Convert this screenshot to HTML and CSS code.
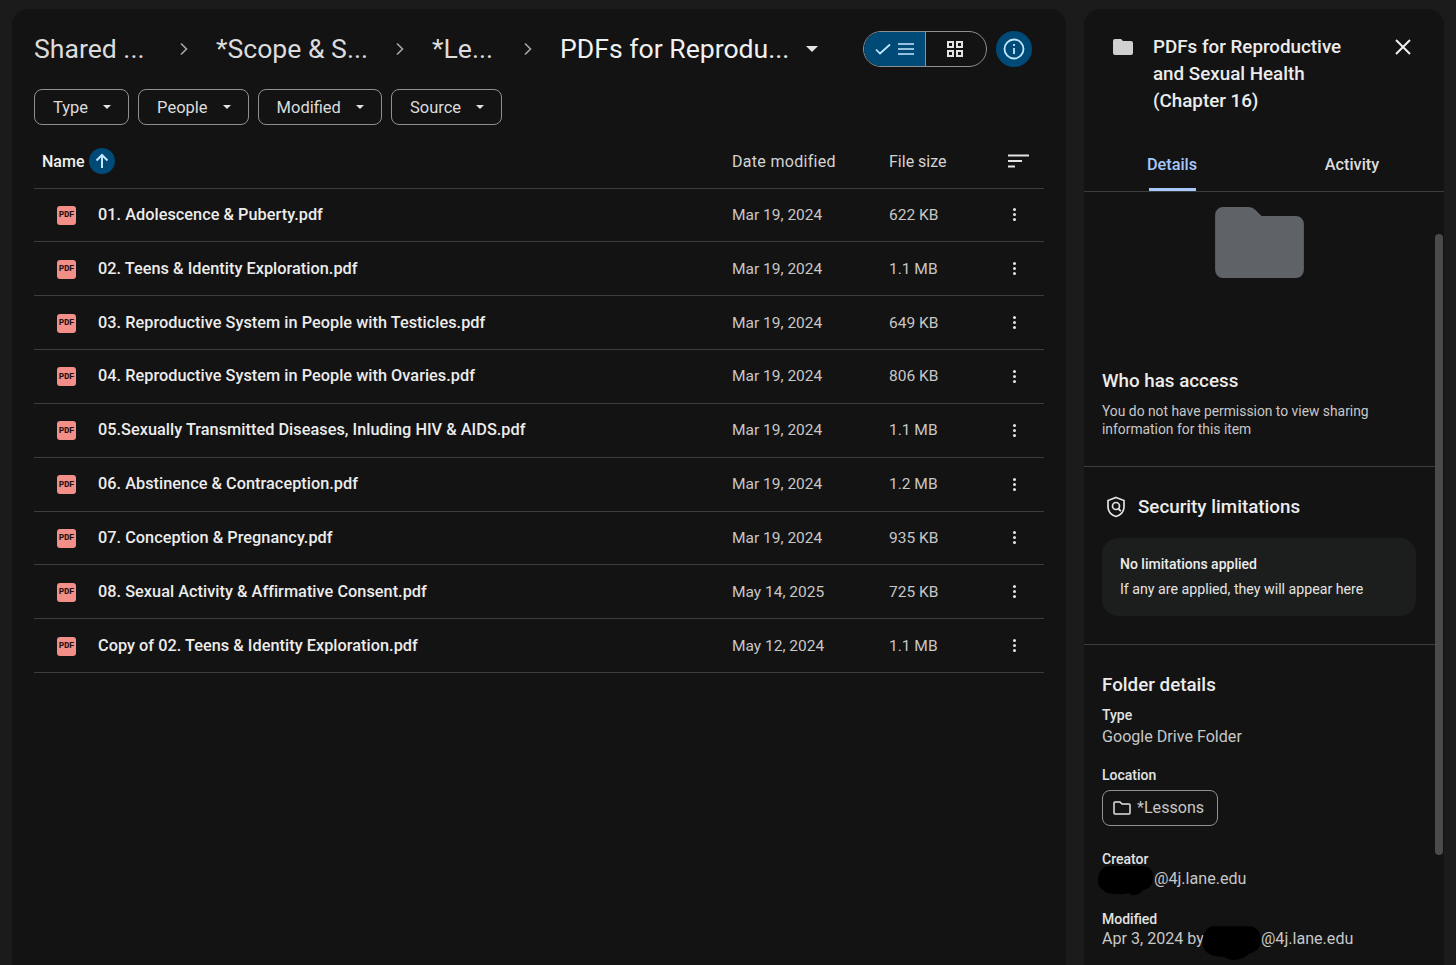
FILE: index.html
```html
<!DOCTYPE html>
<html>
<head>
  <title>PDFs for Reproductive and Sexual Health (Chapter 16)</title>
  <link rel="stylesheet" href="styles.css">
</head>
<body>
  <main class="files">
    <div class="toolbar">
      <div class="crumbs">
        <span class="crumb crumb-shared">Shared ...</span>
        <svg class="chevron" viewBox="0 0 8 14"><path d="M1 1.5 6.5 7 1 12.5"/></svg>
        <span class="crumb crumb-scope">*Scope &amp; S...</span>
        <svg class="chevron" viewBox="0 0 8 14"><path d="M1 1.5 6.5 7 1 12.5"/></svg>
        <span class="crumb crumb-lessons">*Le...</span>
        <svg class="chevron" viewBox="0 0 8 14"><path d="M1 1.5 6.5 7 1 12.5"/></svg>
        <span class="crumb crumb-current">PDFs for Reprodu...</span>
        <span class="caret caret-big"></span>
      </div>
      <div class="view-toggle">
        <span class="view-list">
          <svg width="16" height="12" viewBox="0 0 16 12"><path d="M1 6.5 5 10.5 15 1.5"/></svg>
          <svg width="16" height="14" viewBox="0 0 16 14"><path d="M0 2h16M0 7h16M0 12h16"/></svg>
        </span>
        <span class="view-grid">
          <svg width="16" height="16" viewBox="0 0 16 16"><path d="M1 1h5v5H1zM10 1h5v5h-5zM1 10h5v5H1zM10 10h5v5h-5z"/></svg>
        </span>
      </div>
      <span class="info-btn">
        <svg width="22" height="22" viewBox="0 0 22 22"><circle cx="11" cy="11" r="9.5"/><path d="M11 10v6"/><path d="M11 6v2"/></svg>
      </span>
    </div>

    <div class="filters">
      <span class="filter">Type <span class="caret"></span></span>
      <span class="filter">People <span class="caret"></span></span>
      <span class="filter">Modified <span class="caret"></span></span>
      <span class="filter">Source <span class="caret"></span></span>
    </div>

    <div class="file-table">
      <div class="file-row file-head">
        <span class="head-name">Name
          <span class="sort-btn"><svg width="14" height="16" viewBox="0 0 14 16"><path d="M7 15V2M1.5 7.5 7 2l5.5 5.5"/></svg></span>
        </span>
        <span class="head-date">Date modified</span>
        <span>File size</span>
        <svg class="sort-lines" width="22" height="14" viewBox="0 0 22 14"><path d="M0 1.5h21M0 7h14M0 12.500h7"/></svg>
      </div>

      <div class="file-row">
        <span class="file-name"><span class="pdf-icon">PDF</span>01. Adolescence &amp; Puberty.pdf</span>
        <span>Mar 19, 2024</span><span>622 KB</span><span class="kebab"></span>
      </div>
      <div class="file-row">
        <span class="file-name"><span class="pdf-icon">PDF</span>02. Teens &amp; Identity Exploration.pdf</span>
        <span>Mar 19, 2024</span><span>1.1 MB</span><span class="kebab"></span>
      </div>
      <div class="file-row">
        <span class="file-name"><span class="pdf-icon">PDF</span>03. Reproductive System in People with Testicles.pdf</span>
        <span>Mar 19, 2024</span><span>649 KB</span><span class="kebab"></span>
      </div>
      <div class="file-row">
        <span class="file-name"><span class="pdf-icon">PDF</span>04. Reproductive System in People with Ovaries.pdf</span>
        <span>Mar 19, 2024</span><span>806 KB</span><span class="kebab"></span>
      </div>
      <div class="file-row">
        <span class="file-name"><span class="pdf-icon">PDF</span>05.Sexually Transmitted Diseases, Inluding HIV &amp; AIDS.pdf</span>
        <span>Mar 19, 2024</span><span>1.1 MB</span><span class="kebab"></span>
      </div>
      <div class="file-row">
        <span class="file-name"><span class="pdf-icon">PDF</span>06. Abstinence &amp; Contraception.pdf</span>
        <span>Mar 19, 2024</span><span>1.2 MB</span><span class="kebab"></span>
      </div>
      <div class="file-row">
        <span class="file-name"><span class="pdf-icon">PDF</span>07. Conception &amp; Pregnancy.pdf</span>
        <span>Mar 19, 2024</span><span>935 KB</span><span class="kebab"></span>
      </div>
      <div class="file-row">
        <span class="file-name"><span class="pdf-icon">PDF</span>08. Sexual Activity &amp; Affirmative Consent.pdf</span>
        <span>May 14, 2025</span><span>725 KB</span><span class="kebab"></span>
      </div>
      <div class="file-row">
        <span class="file-name"><span class="pdf-icon">PDF</span>Copy of 02. Teens &amp; Identity Exploration.pdf</span>
        <span>May 12, 2024</span><span>1.1 MB</span><span class="kebab"></span>
      </div>
    </div>
  </main>

  <aside class="details">
    <div class="details-title">
      <svg class="title-folder" width="20" height="16" viewBox="0 0 20 16"><path d="M2 0h6l2 2h8a2 2 0 0 1 2 2v10a2 2 0 0 1-2 2H2a2 2 0 0 1-2-2V2a2 2 0 0 1 2-2z"/></svg>
      <h2>PDFs for Reproductive and Sexual Health (Chapter 16)</h2>
      <svg class="close" width="16" height="16" viewBox="0 0 16 16"><path d="M1 1l14 14M15 1 1 15"/></svg>
    </div>

    <div class="tabs">
      <span class="tab tab-active">Details</span>
      <span class="tab">Activity</span>
    </div>

    <div class="preview">
      <svg width="89" height="71" viewBox="0 0 90 72"><path d="M8 0h26q4 0 7 3l6 6h35a8 8 0 0 1 8 8v47a8 8 0 0 1-8 8H8a8 8 0 0 1-8-8V8a8 8 0 0 1 8-8z"/></svg>
    </div>

    <section class="section access">
      <h3>Who has access</h3>
      <p>You do not have permission to view sharing information for this item</p>
    </section>

    <section class="section security">
      <h3 class="security-title">
        <svg width="20" height="22" viewBox="0 0 20 22"><path d="M10 1.500 18 4.500v6c0 5-3.400 8.500-8 10-4.600-1.500-8-5-8-10v-6z"/><circle cx="10" cy="10" r="3.500"/><path d="M12.500 12.500c.5 1 1.500 2 2.500 2.500"/></svg>
        Security limitations
      </h3>
      <div class="limit-card">
        <strong>No limitations applied</strong>
        <span>If any are applied, they will appear here</span>
      </div>
    </section>

    <section class="folder-details">
      <h3>Folder details</h3>
      <dl>
        <dt>Type</dt>
        <dd>Google Drive Folder</dd>
        <dt class="dt-location">Location</dt>
        <dd>
          <span class="location-chip">
            <svg width="18" height="14" viewBox="0 0 18 14"><path d="M2 1h5l2 2h7a1 1 0 0 1 1 1v8a1 1 0 0 1-1 1H2a1 1 0 0 1-1-1V2a1 1 0 0 1 1-1z"/></svg>
            *Lessons
          </span>
        </dd>
        <dt class="dt-creator">Creator</dt>
        <dd class="person"><svg class="redacted redacted-creator" viewBox="0 0 56 32"><path d="M12 1h32c8 0 12 5 11 13-1 7-4 10-10 11-4 5-10 7-14 3-6 2-22 2-26-3C-1 21-1 14 1 9 3 4 7 1 12 1z"/></svg>@4j.lane.edu</dd>
        <dt class="dt-modified">Modified</dt>
        <dd class="person">Apr 3, 2024 by<svg class="redacted redacted-modified" viewBox="0 0 56 34"><path d="M10 1h34c8 0 12 6 12 13 0 8-5 12-11 13-6 7-18 8-24 3C12 30 3 28 1 20-1 12 3 2 10 1z"/></svg>@4j.lane.edu</dd>
      </dl>
    </section>

    <span class="scroll-thumb"></span>
  </aside>
</body>
</html>
```

FILE: styles.css
```css
/* Page */
html, body {
  height: 100%;
}
body {
  margin: 0;
  padding: 9px 12px 0;
  box-sizing: border-box;
  display: flex;
  gap: 18px;
  overflow: hidden;
  background-color: #1b1b1b;
  color: #e3e3e3;
  font-family: Roboto, "Liberation Sans", sans-serif;
  font-size: 16px;
}
h2, h3, p, dl, dd {
  margin: 0;
}
svg {
  display: block;
  flex: none;
  fill: none;
}

/* Left panel */
.files {
  width: 1054px;
  flex: none;
  box-sizing: border-box;
  padding: 0 22px;
  background-color: #131313;
  border-radius: 16px 16px 0 0;
}
.toolbar {
  height: 80px;
  display: flex;
  align-items: center;
}
.crumbs {
  width: 829px;
  display: flex;
  align-items: center;
  font-size: 26.6px;
  color: #dcdcdc;
  white-space: nowrap;
}
.crumb {
  flex: none;
  margin-top: -1px;
}
.crumb-shared { width: 118px; }
.crumb-scope { width: 152px; }
.crumb-lessons { width: 64px; }
.crumb-current { color: #f0f0f0; }
.chevron {
  width: 8px;
  height: 14px;
  margin: 0 28px;
}
.chevron path {
  stroke: #a8a8a8;
  stroke-width: 1.6;
}
.caret {
  display: inline-block;
  width: 0;
  height: 0;
  border-left: 4px solid transparent;
  border-right: 4px solid transparent;
  border-top: 4px solid #e3e3e3;
}
.caret-big {
  margin-left: 17px;
  border-left-width: 6px;
  border-right-width: 6px;
  border-top-width: 6px;
}
.view-toggle {
  width: 124px;
  height: 36px;
  box-sizing: border-box;
  display: flex;
  border: 1px solid #8e918f;
  border-radius: 18px;
  overflow: hidden;
}
.view-list {
  width: 61px;
  display: flex;
  align-items: center;
  justify-content: center;
  gap: 7px;
  background-color: #004a77;
  border-right: 1px solid #8e918f;
}
.view-list path {
  stroke: #c2e7ff;
  stroke-width: 1.7;
}
.view-grid {
  flex: 1;
  display: flex;
  align-items: center;
  padding-left: 21px;
}
.view-grid path {
  stroke: #e3e3e3;
  stroke-width: 2;
}
.info-btn {
  width: 36px;
  height: 36px;
  margin-left: 9px;
  display: flex;
  align-items: center;
  justify-content: center;
  border-radius: 50%;
  background-color: #004a77;
}
.info-btn circle, .info-btn path {
  stroke: #c2e7ff;
  stroke-width: 1.8;
}

/* Filter chips */
.filters {
  display: flex;
  gap: 9px;
}
.filter {
  height: 36px;
  box-sizing: border-box;
  display: flex;
  align-items: center;
  gap: 15px;
  padding: 0 17px 0 18px;
  border: 1px solid #8e918f;
  border-radius: 8px;
  color: #dcdcdc;
  font-size: 16.5px;
}

/* File table */
.file-table {
  margin-top: 10px;
  width: 1010px;
}
.file-row {
  height: 53.85px;
  box-sizing: border-box;
  display: grid;
  grid-template-columns: 698px 157px 1fr 60px;
  align-items: center;
  border-bottom: 1px solid #3c3d3d;
  color: #c7c7c7;
  font-size: 15.5px;
}
.file-head {
  height: 53.5px;
  color: #d4d4d4;
  font-size: 16px;
}
.head-name {
  display: flex;
  align-items: center;
  gap: 5px;
  padding-left: 8px;
  color: #f0f0f0;
  font-weight: 500;
}
.head-date {
  letter-spacing: .3px;
}
.sort-btn {
  width: 26px;
  height: 26px;
  display: flex;
  align-items: center;
  justify-content: center;
  border-radius: 50%;
  background-color: #004a77;
}
.sort-btn path {
  stroke: #c2e7ff;
  stroke-width: 2;
}
.sort-lines {
  margin-left: 24px;
}
.sort-lines path {
  stroke: #e3e3e3;
  stroke-width: 2;
}
.file-name {
  display: flex;
  align-items: center;
  color: #ececec;
  font-size: 16.3px;
  letter-spacing: .03px;
  font-weight: 500;
  margin-top: -1px;
}
.pdf-icon {
  width: 19px;
  height: 19px;
  margin: 2px 22px 0 23px;
  display: flex;
  align-items: center;
  justify-content: center;
  border-radius: 3px;
  background-color: #f28f88;
  color: #241010;
  font-family: "Liberation Mono", monospace;
  font-size: 9px;
  font-weight: bold;
  letter-spacing: -.2px;
}
.kebab {
  justify-self: center;
  width: 3px;
  height: 3px;
  border-radius: 50%;
  background-color: #e3e3e3;
  box-shadow: 0 -5px 0 #e3e3e3, 0 5px 0 #e3e3e3;
}

/* Right panel */
.details {
  position: relative;
  width: 360px;
  flex: none;
  background-color: #131313;
  border-radius: 16px 16px 0 0;
}
.details-title {
  display: flex;
  padding: 25px 33px 0 29px;
  height: 115px;
  box-sizing: border-box;
}
.title-folder {
  margin-top: 5px;
}
.title-folder path {
  fill: #d0d0d0;
}
.details-title h2 {
  width: 200px;
  margin-left: 20px;
  font-size: 18.8px;
  font-weight: 500;
  line-height: 27px;
  color: #ececec;
}
.close {
  margin: 5px 0 0 auto;
}
.close path {
  stroke: #eeeeee;
  stroke-width: 2;
}
.tabs {
  height: 68px;
  box-sizing: border-box;
  display: grid;
  grid-template-columns: 176px 1fr;
  border-bottom: 1px solid #3c3d3d;
}
.tab {
  justify-self: center;
  height: 67px;
  line-height: 81px;
  box-sizing: border-box;
  color: #dcdcdc;
  font-size: 16.3px;
  font-weight: 500;
}
.tab-active {
  width: 47px;
  display: flex;
  justify-content: center;
  line-height: 81px;
  color: #a8c7fa;
  border-bottom: 3px solid #a8c7fa;
}
.preview {
  height: 168px;
  padding-top: 15px;
  box-sizing: border-box;
  display: flex;
  justify-content: center;
  padding-right: 9px;
}
.preview path {
  fill: #5f6368;
}
.section {
  margin-right: 9px;
  padding: 0 18px;
  border-bottom: 1px solid #3c3d3d;
  box-sizing: border-box;
}
.section h3, .folder-details h3 {
  font-size: 18.8px;
  font-weight: 500;
  line-height: 26px;
  color: #ececec;
}
.access {
  height: 107px;
  padding-top: 8px;
}
.access p {
  margin-top: 8px;
  width: 290px;
  font-size: 13.85px;
  line-height: 18px;
  color: #c7c7c7;
}
.security {
  height: 178px;
  padding-top: 27px;
}
.security-title {
  display: flex;
  align-items: center;
  gap: 12px;
  padding-left: 4px;
}
.security-title path, .security-title circle {
  stroke: #e3e3e3;
  stroke-width: 1.7;
}
.limit-card {
  margin-top: 18px;
  width: 314px;
  height: 78px;
  box-sizing: border-box;
  padding: 17px 18px;
  display: flex;
  flex-direction: column;
  gap: 7px;
  background-color: #1c1d1d;
  border-radius: 16px;
  font-size: 14.2px;
  line-height: 18px;
}
.limit-card strong {
  font-size: 14px;
  font-weight: 500;
  color: #ececec;
}
.folder-details {
  padding: 27px 18px 0;
}
.folder-details dt {
  margin-top: 8px;
  font-size: 14px;
  font-weight: 500;
  line-height: 18px;
  color: #e3e3e3;
}
.folder-details .dt-location { margin-top: 17px; }
.folder-details .dt-creator { margin-top: 24px; }
.folder-details .dt-modified { margin-top: 21px; }
.folder-details dd {
  font-size: 16.1px;
  line-height: 24px;
  color: #c7c7c7;
  margin-top: 1px;
}
.location-chip {
  display: inline-flex;
  align-items: center;
  gap: 6px;
  height: 36px;
  box-sizing: border-box;
  margin-top: 5px;
  padding: 0 13px 0 10px;
  border: 1px solid #8e918f;
  border-radius: 8px;
  vertical-align: top;
}
.location-chip path {
  stroke: #e3e3e3;
  stroke-width: 1.5;
}
.folder-details .person {
  display: flex;
  align-items: center;
  height: 20px;
}
.redacted {
  height: 32px;
}
.redacted path {
  fill: #000;
}
.redacted-creator {
  width: 56px;
  margin-left: -4px;
  margin-top: 4px;
}
.redacted-modified {
  width: 59px;
  height: 36px;
  margin-left: -2px;
  margin-top: 7px;
}
.scroll-thumb {
  position: absolute;
  top: 225px;
  right: 1px;
  width: 8px;
  height: 621px;
  border-radius: 4px;
  background-color: #4a4c4c;
}
```
